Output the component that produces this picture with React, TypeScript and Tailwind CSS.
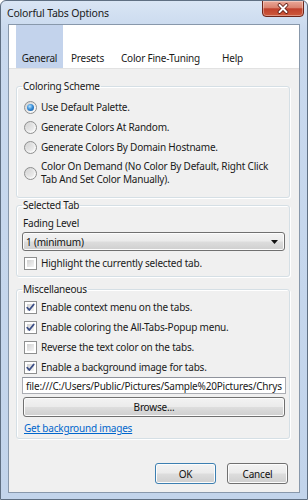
import React from "react";

function Radio({ checked }: { checked?: boolean }) {
  return (
    <span className="w-[13px] h-[13px] rounded-full border border-[#8e8f8f] bg-[linear-gradient(135deg,#cfcfcf,#f4f4f4_70%,#ffffff)] flex items-center justify-center shrink-0">
      {checked ? (
        <span className="w-[7px] h-[7px] rounded-full bg-[radial-gradient(circle_at_40%_35%,#b8e4ff_0%,#3a8fd8_45%,#0f4f96_100%)]" />
      ) : (
        <span className="w-[7px] h-[7px] rounded-full bg-[linear-gradient(135deg,#d6d6d6,#efefef)]" />
      )}
    </span>
  );
}

function Check({ checked }: { checked?: boolean }) {
  return (
    <span className="relative w-[13px] h-[13px] border border-[#8e8f8f] bg-white shrink-0">
      <span className="absolute inset-[2px] bg-[linear-gradient(135deg,#d2d2d2,#f4f4f4)]" />
      {checked && (
        <svg className="absolute inset-0" width="11" height="11" viewBox="0 0 11 11">
          <path d="M2.2 5.6 L4.3 8 L8.8 2.4" fill="none" stroke="#3d5088" strokeWidth="1.7" strokeLinecap="round" strokeLinejoin="round" />
        </svg>
      )}
    </span>
  );
}

const btn =
  "border rounded-[3px] bg-[linear-gradient(180deg,#f3f3f3_0%,#ebebeb_48%,#dddddd_52%,#cfcfcf_100%)] flex items-center text-[#111] shadow-[inset_0_0_0_1px_#fcfcfc]";

const fs =
  "min-w-0 border border-[#d5dfe5] rounded-[3px] shadow-[inset_1px_1px_0_#ffffff,1px_1px_0_#ffffff]";

export default function App() {
  return (
    <div className="w-[308px] h-[500px] flex flex-col border border-[#5f6f82] rounded-t-[6px] bg-[linear-gradient(180deg,#d9e5f4_0%,#c9d9ee_6%,#c2d4eb_100%)] font-['Noto_Sans',sans-serif] text-[10px] tracking-[-0.2px] text-[#1a1a1a] overflow-hidden">
      {/* Title bar */}
      <div className="h-[23px] flex items-start justify-between shrink-0">
        <div className="pl-[6px] pt-[5px] text-[10.5px] leading-[14px] text-[#1b1b1b]">Colorful Tabs Options</div>
        <div className="w-[42px] h-[17px] mr-[3px] -mt-[1px] rounded-b-[4px] border border-[#6e2519] bg-[linear-gradient(180deg,#eba999_0%,#d9826f_45%,#c0412c_52%,#cd5a3c_100%)] shadow-[inset_0_0_0_1px_rgba(255,255,255,0.35)] flex items-center justify-center">
          <svg width="12" height="11" viewBox="0 0 12 11">
            <path d="M2.5 2 L9.5 9 M9.5 2 L2.5 9" stroke="#5a1810" strokeWidth="3.6" strokeLinecap="round" />
            <path d="M2.5 2 L9.5 9 M9.5 2 L2.5 9" stroke="#ffffff" strokeWidth="2" strokeLinecap="round" />
          </svg>
        </div>
      </div>

      {/* Client */}
      <div className="flex-1 mx-[7px] mb-[6px] border border-[#8898ab] flex flex-col bg-[#f0f0f0]">
        {/* Tab header */}
        <div className="h-[44px] bg-white flex items-stretch pl-[7px] border-b border-[#e2e2e2] shrink-0">
          <div className="w-[47px] bg-[#c3d3ec] flex items-end justify-center pb-[3px] leading-[14px]">General</div>
          <div className="w-[49px] flex items-end justify-center pb-[3px] leading-[14px]">Presets</div>
          <div className="w-[97px] flex items-end justify-center pb-[3px] leading-[14px]">Color Fine-Tuning</div>
          <div className="w-[47px] flex items-end justify-center pb-[3px] leading-[14px]">Help</div>
        </div>

        {/* Body */}
        <div className="flex-1 flex flex-col pl-[7px] pr-[9px] pt-[10px] min-w-0">
          {/* Coloring Scheme */}
          <fieldset className={fs + " pb-[11px]"}>
            <legend className="ml-[5px] px-[1px] leading-[14px]">Coloring Scheme</legend>
            <div className="flex flex-col pt-[4px] pl-[7px]">
              <div className="h-[20px] flex items-center gap-[4px]">
                <Radio checked />
                <span>Use Default Palette.</span>
              </div>
              <div className="h-[20px] flex items-center gap-[4px]">
                <Radio />
                <span>Generate Colors At Random.</span>
              </div>
              <div className="h-[20px] flex items-center gap-[4px]">
                <Radio />
                <span>Generate Colors By Domain Hostname.</span>
              </div>
              <div className="flex items-center gap-[4px] pt-[3px]">
                <Radio />
                <span className="leading-[13px]">
                  Color On Demand (No Color By Default, Right Click
                  <br />
                  Tab And Set Color Manually).
                </span>
              </div>
            </div>
          </fieldset>

          {/* Selected Tab */}
          <fieldset className={fs + " pb-[3px]"}>
            <legend className="ml-[5px] px-[1px] leading-[14px]">Selected Tab</legend>
            <div className="flex flex-col pl-[5px] pr-[4px]">
              <div className="pl-[1px] mt-[4px] leading-[14px]">Fading Level</div>
              <div className={btn + " mt-[2px] h-[19px] border-[#707070] justify-between pl-[3px] pr-[6px]"}>
                <span className="leading-[14px]">1 (minimum)</span>
                <svg width="7" height="4" viewBox="0 0 7 4">
                  <path d="M0 0 H7 L3.5 4 Z" fill="#111" />
                </svg>
              </div>
              <div className="h-[20px] mt-[2px] flex items-center gap-[4px] pl-[2px]">
                <Check />
                <span>Highlight the currently selected tab.</span>
              </div>
            </div>
          </fieldset>

          {/* Miscellaneous */}
          <fieldset className={fs + " mt-[5px] pb-[3px]"}>
            <legend className="ml-[5px] px-[1px] leading-[14px]">Miscellaneous</legend>
            <div className="flex flex-col pl-[5px] pr-[3px] pt-[1px] min-w-0">
              <div className="h-[20px] flex items-center gap-[4px] pl-[2px]">
                <Check checked />
                <span>Enable context menu on the tabs.</span>
              </div>
              <div className="h-[20px] flex items-center gap-[4px] pl-[2px]">
                <Check checked />
                <span>Enable coloring the All-Tabs-Popup menu.</span>
              </div>
              <div className="h-[20px] flex items-center gap-[4px] pl-[2px]">
                <Check />
                <span>Reverse the text color on the tabs.</span>
              </div>
              <div className="h-[20px] flex items-center gap-[4px] pl-[2px]">
                <Check checked />
                <span>Enable a background image for tabs.</span>
              </div>
              <div className="h-[17px] min-w-0 border border-[#abadb3] border-t-[#8f939c] bg-white flex items-center pl-[3px] overflow-hidden whitespace-nowrap">
                <span className="leading-[14px]">file:///C:/Users/Public/Pictures/Sample%20Pictures/Chrys</span>
              </div>
              <div className={btn + " mt-[3px] h-[20px] border-[#707070] mx-[1px] justify-center"}>
                <span className="leading-[14px]">Browse...</span>
              </div>
              <div className="mt-[4px] pl-[2px] leading-[14px]">
                <span className="text-[#0066cc] underline">Get background images</span>
              </div>
            </div>
          </fieldset>

          {/* Buttons */}
          <div className="mt-[24px] flex justify-end gap-[11px] pr-[2px]">
            <div className={btn + " w-[61px] h-[21px] border-[#3c7fb1] justify-center shadow-[inset_0_0_0_1px_#bfe6f8]"}>
              <span className="leading-[14px]">OK</span>
            </div>
            <div className={btn + " w-[61px] h-[21px] border-[#707070] justify-center"}>
              <span className="leading-[14px]">Cancel</span>
            </div>
          </div>
        </div>
      </div>
    </div>
  );
}
